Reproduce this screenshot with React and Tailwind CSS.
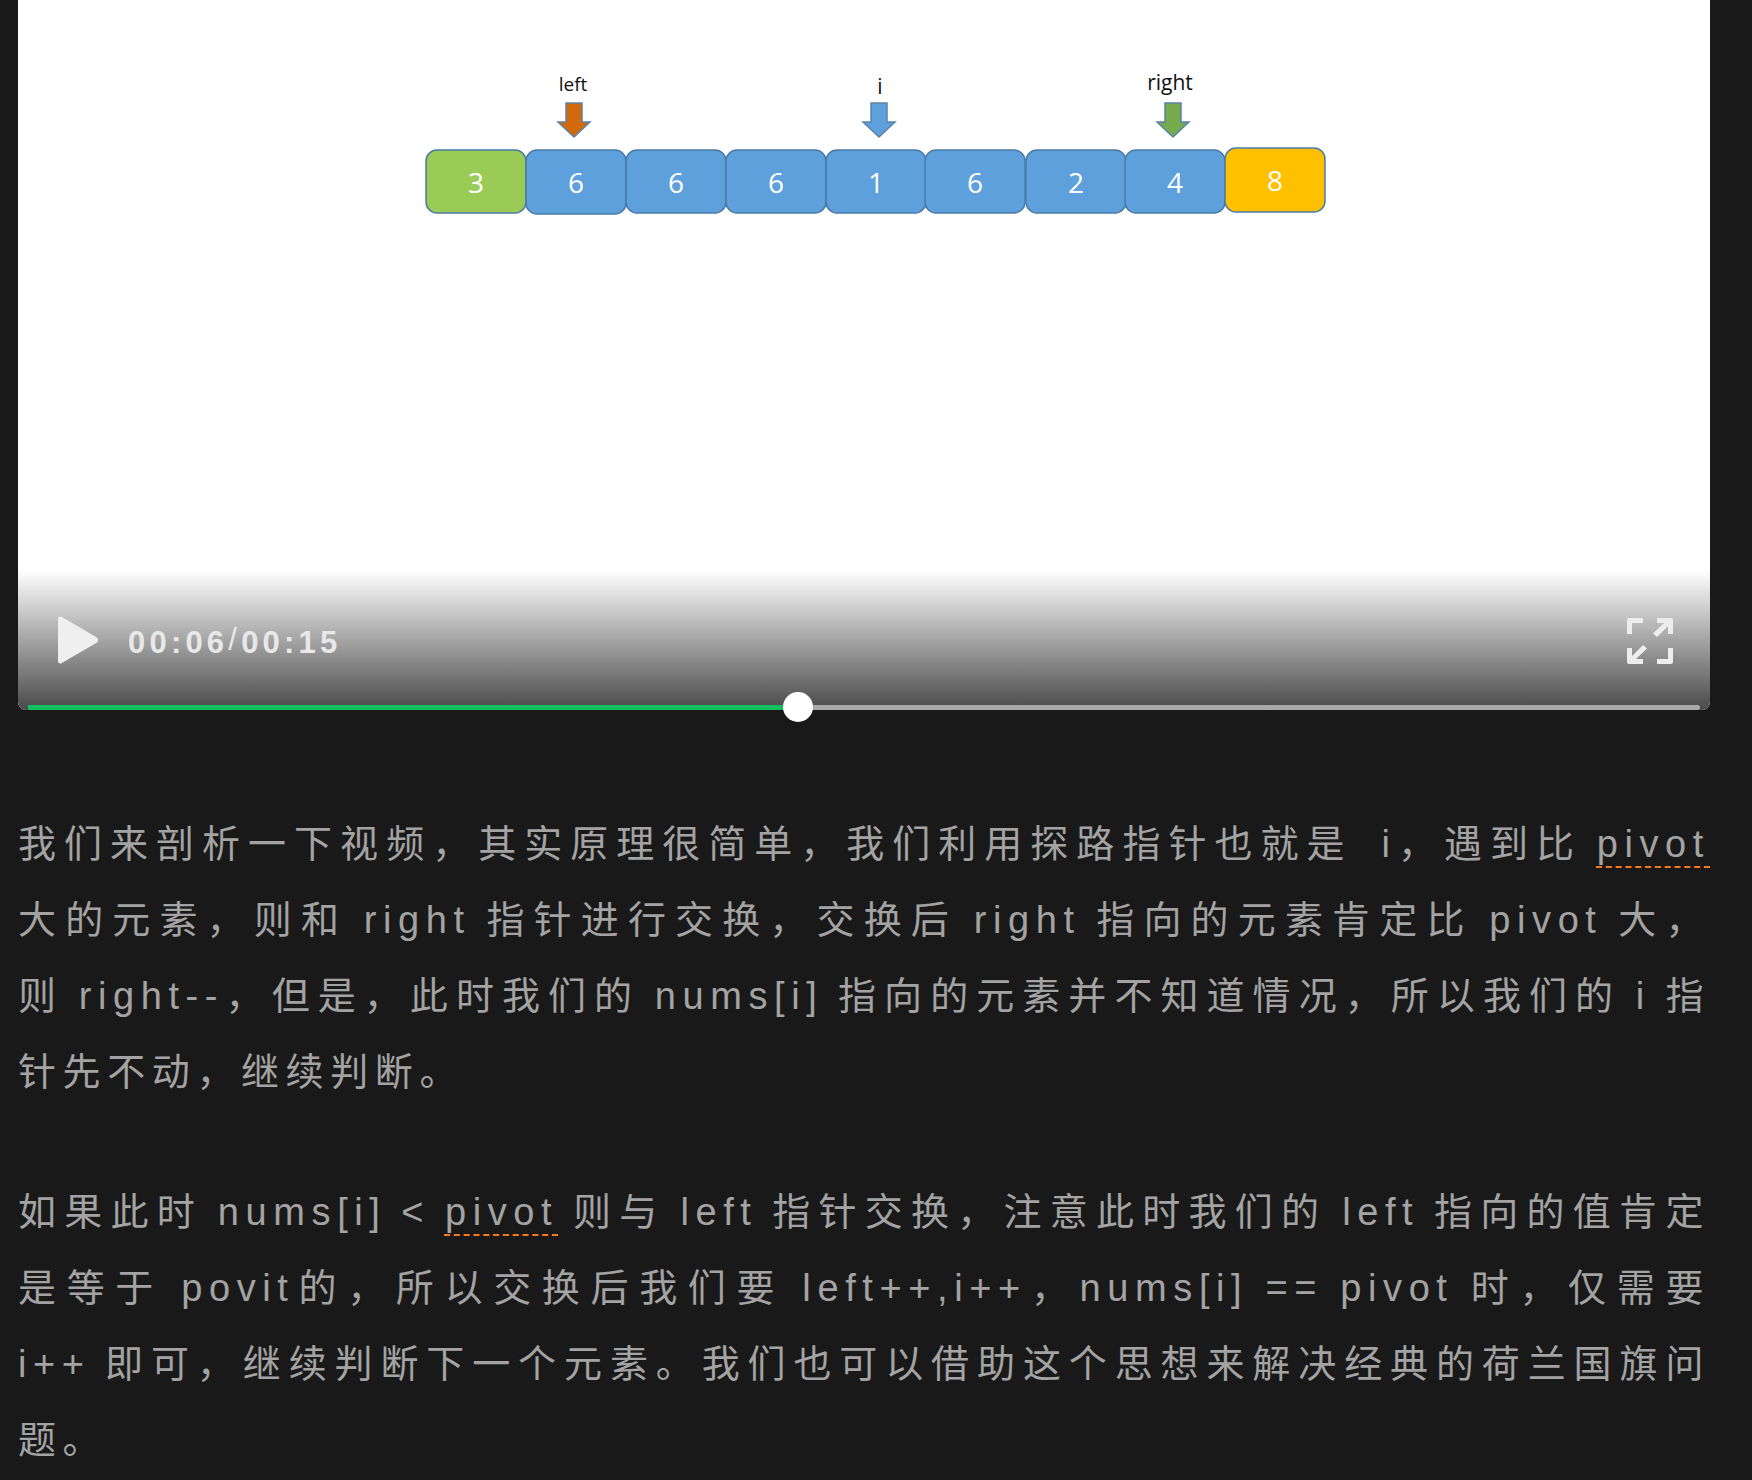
const cells = [
  { x: 426, v: "3", fill: "#9bcb57" },
  { x: 526, v: "6", fill: "#5ea0dc", h: 64 },
  { x: 626, v: "6", fill: "#5ea0dc" },
  { x: 726, v: "6", fill: "#5ea0dc" },
  { x: 826, v: "1", fill: "#5ea0dc" },
  { x: 925, v: "6", fill: "#5ea0dc" },
  { x: 1026, v: "2", fill: "#5ea0dc" },
  { x: 1125, v: "4", fill: "#5ea0dc" },
  { x: 1225, v: "8", fill: "#ffc000", y: 148, h: 64 },
];

const arrows = [
  { x: 574, fill: "#d2690b" },
  { x: 879, fill: "#5ea0dc" },
  { x: 1173, fill: "#76aa4e" },
];

const Diagram = () => (
  <svg width="1692" height="300" viewBox="18 0 1692 300" className="block">
    {arrows.map((a) => (
      <path
        key={a.x}
        d={`M${a.x - 8} 103h16v19h8l-16 15-16-15h8z`}
        fill={a.fill}
        stroke="#5b82a8"
        strokeWidth="1.5"
      />
    ))}
    <text x="573" y="91" textAnchor="middle" fontSize="19" fill="#111" fontFamily="'Open Sans', sans-serif">left</text>
    <text x="880" y="94" textAnchor="middle" fontSize="21" fill="#111" fontFamily="'Open Sans', sans-serif">i</text>
    <text x="1170" y="90" textAnchor="middle" fontSize="21" fill="#111" fontFamily="'Open Sans', sans-serif">right</text>
    {cells.map((c) => {
      const y = c.y ?? 150;
      return (
        <g key={c.x}>
          <rect x={c.x} y={y} width="100" height={c.h ?? 63} rx="11" fill={c.fill} stroke="#4a7ba6" strokeWidth="1.5" />
          <text
            x={c.x + 50}
            y={y + 43}
            textAnchor="middle"
            fontSize="28"
            fill="#fff"
            fontFamily="'Open Sans', sans-serif"
          >
            {c.v}
          </text>
        </g>
      );
    })}
  </svg>
);

const Controls = () => (
  <div className="absolute inset-x-0 bottom-0 h-[140px] rounded-b-lg bg-gradient-to-b from-white/0 to-[#4a4a4a]">
    <div className="flex h-[135px] items-end justify-between pb-[41px] pl-[40px] pr-[37px]">
      <div className="flex items-center gap-[29px]">
        <svg width="41" height="48" viewBox="0 0 41 48">
          <path d="M3 0.500 Q0 0 0 3v42q0 3 3 2.500l36-21q2-2.500 0-5z" fill="#efefef" />
        </svg>
        <span className="mt-[6px] text-[31px] leading-[36px] font-bold tracking-[4.2px] text-[#e8e8e8] font-['Liberation_Sans',sans-serif]">
          00:06<span className="relative -top-[3px] font-normal">/</span>00:15
        </span>
      </div>
      <svg width="46" height="46" viewBox="0 0 46 46" fill="#ededed">
        <path d="M0 2q0-2 2-2h14v5H5v11H0z" />
        <path d="M30 0h14q2 0 2 2v14h-5V8L30 19l-4-3.500L37 5h-7z" />
        <path d="M0 30h5v8L16 27l4 3.500L9 41h7v5H2q-2 0-2-2z" />
        <path d="M41 30h5v14q0 2-2 2H30v-5h11z" />
      </svg>
    </div>
    <div className="absolute inset-x-[10px] bottom-0 h-[5px] rounded-r-sm bg-[#a9a9a9]">
      <div className="h-full w-[770px] bg-[#12bf5e]" />
      <div className="absolute left-[755px] top-[-13px] h-[30px] w-[30px] rounded-full bg-white" />
    </div>
  </div>
);

const Mark = ({ children }) => (
  <span className="[text-decoration:underline_dashed_#ff7a14_2px] [text-underline-offset:9px]">{children}</span>
);

const Line = ({ children, last }) => (
  <span className={`block whitespace-pre-wrap ${last ? "" : "text-justify [text-align-last:justify]"}`}>{children}</span>
);

const App = () => (
  <div className="h-[1480px] overflow-hidden bg-[#191919] pl-[18px] pr-[42px]">
    <div className="relative h-[710px] rounded-b-lg bg-white">
      <Diagram />
      <Controls />
    </div>
    <div className="mt-[96px] text-[38px] leading-[76px] tracking-[6.6px] [word-spacing:-4px] text-[#a3a3a3] font-['Liberation_Sans','Noto_Sans_CJK_SC',sans-serif]">
      <p>
        <Line>我们来剖析一下视频，其实原理很简单，我们利用探路指针也就是  i，遇到比 <Mark>pivot</Mark></Line>
        <Line>大的元素，则和 right 指针进行交换，交换后 right 指向的元素肯定比 pivot 大，</Line>
        <Line>则 right--，但是，此时我们的 nums[i] 指向的元素并不知道情况，所以我们的 i 指</Line>
        <Line last>针先不动，继续判断。</Line>
      </p>
      <p className="mt-[64px]">
        <Line>如果此时 nums[i] &lt; <Mark>pivot</Mark> 则与 left 指针交换，注意此时我们的 left 指向的值肯定</Line>
        <Line>是等于 povit的，所以交换后我们要 left++,i++，nums[i] == pivot 时，仅需要</Line>
        <Line>i++ 即可，继续判断下一个元素。我们也可以借助这个思想来解决经典的荷兰国旗问</Line>
        <Line last>题。</Line>
      </p>
    </div>
  </div>
);

export default App;
